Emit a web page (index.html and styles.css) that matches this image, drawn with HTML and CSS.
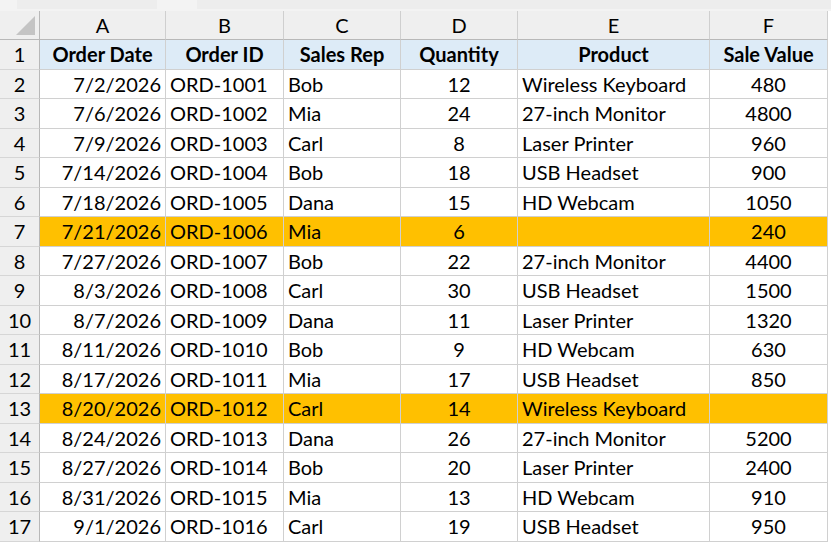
FILE: index.html
```html
<!DOCTYPE html>
<html lang="en">
<head>
  <meta charset="UTF-8" />
  <title>Orders</title>
  <link rel="stylesheet" href="styles.css">
</head>
<body>
  <div class="topbar"><span class="namebox"></span><span class="fx"></span></div>
  <div class="sheet">
    <div class="row colhead">
      <div class="corner"><span class="tri"></span></div>
      <div>A</div><div>B</div><div>C</div><div>D</div><div>E</div><div>F</div>
    </div>
    <div class="row titles">
      <div class="num">1</div>
      <div>Order Date</div><div>Order ID</div><div>Sales Rep</div><div>Quantity</div><div>Product</div><div>Sale Value</div>
    </div>
    <div class="row"><div class="num">2</div><div class="r">7/2/2026</div><div>ORD-1001</div><div>Bob</div><div class="c">12</div><div>Wireless Keyboard</div><div class="c">480</div></div>
    <div class="row"><div class="num">3</div><div class="r">7/6/2026</div><div>ORD-1002</div><div>Mia</div><div class="c">24</div><div>27-inch Monitor</div><div class="c">4800</div></div>
    <div class="row"><div class="num">4</div><div class="r">7/9/2026</div><div>ORD-1003</div><div>Carl</div><div class="c">8</div><div>Laser Printer</div><div class="c">960</div></div>
    <div class="row"><div class="num">5</div><div class="r">7/14/2026</div><div>ORD-1004</div><div>Bob</div><div class="c">18</div><div>USB Headset</div><div class="c">900</div></div>
    <div class="row"><div class="num">6</div><div class="r">7/18/2026</div><div>ORD-1005</div><div>Dana</div><div class="c">15</div><div>HD Webcam</div><div class="c">1050</div></div>
    <div class="row flag"><div class="num">7</div><div class="r">7/21/2026</div><div>ORD-1006</div><div>Mia</div><div class="c">6</div><div></div><div class="c">240</div></div>
    <div class="row"><div class="num">8</div><div class="r">7/27/2026</div><div>ORD-1007</div><div>Bob</div><div class="c">22</div><div>27-inch Monitor</div><div class="c">4400</div></div>
    <div class="row"><div class="num">9</div><div class="r">8/3/2026</div><div>ORD-1008</div><div>Carl</div><div class="c">30</div><div>USB Headset</div><div class="c">1500</div></div>
    <div class="row"><div class="num">10</div><div class="r">8/7/2026</div><div>ORD-1009</div><div>Dana</div><div class="c">11</div><div>Laser Printer</div><div class="c">1320</div></div>
    <div class="row"><div class="num">11</div><div class="r">8/11/2026</div><div>ORD-1010</div><div>Bob</div><div class="c">9</div><div>HD Webcam</div><div class="c">630</div></div>
    <div class="row"><div class="num">12</div><div class="r">8/17/2026</div><div>ORD-1011</div><div>Mia</div><div class="c">17</div><div>USB Headset</div><div class="c">850</div></div>
    <div class="row flag"><div class="num">13</div><div class="r">8/20/2026</div><div>ORD-1012</div><div>Carl</div><div class="c">14</div><div>Wireless Keyboard</div><div class="c"></div></div>
    <div class="row"><div class="num">14</div><div class="r">8/24/2026</div><div>ORD-1013</div><div>Dana</div><div class="c">26</div><div>27-inch Monitor</div><div class="c">5200</div></div>
    <div class="row"><div class="num">15</div><div class="r">8/27/2026</div><div>ORD-1014</div><div>Bob</div><div class="c">20</div><div>Laser Printer</div><div class="c">2400</div></div>
    <div class="row"><div class="num">16</div><div class="r">8/31/2026</div><div>ORD-1015</div><div>Mia</div><div class="c">13</div><div>HD Webcam</div><div class="c">910</div></div>
    <div class="row"><div class="num">17</div><div class="r">9/1/2026</div><div>ORD-1016</div><div>Carl</div><div class="c">19</div><div>USB Headset</div><div class="c">950</div></div>
  </div>
</body>
</html>
```

FILE: styles.css
```css
:root {
  --grid-line: #d0d0d0;
  --head-line: #b8b8b8;
  --head-bg: #efefef;
  --title-bg: #ddebf7;
  --flag-bg: #ffc000;
}

body {
  margin: 0;
  background: #ffffff;
  font-family: Lato, "Open Sans", sans-serif;
  font-size: 20px;
  color: #000;
}

.topbar {
  height: 11px;
  background: #f3f3f3;
  display: flex;
  gap: 40px;
  box-sizing: border-box;
  padding: 0 0 2px 17px;
}

.namebox {
  width: 140px;
  background: #ededed;
}

.fx {
  flex: 1;
  background: #ededed;
}

.sheet {
  width: 828px;
}

.row {
  display: grid;
  grid-template-columns: 40px 126px 118px 117px 117px 192px 118px;
  height: 29.5px;
}

.row > div {
  box-sizing: border-box;
  border-right: 1px solid var(--grid-line);
  border-bottom: 1px solid var(--grid-line);
  padding: 0 4px;
  display: flex;
  align-items: center;
  white-space: nowrap;
  overflow: hidden;
}

.row > .r { justify-content: flex-end; }
.row > .c { justify-content: center; }

.row > .num {
  background: var(--head-bg);
  justify-content: center;
  border-right-color: var(--head-line);
  border-bottom-color: #d6d6d6;
  padding: 0;
}

.colhead {
  height: 29px;
}

.colhead > div {
  background: var(--head-bg);
  justify-content: center;
  border-right-color: #cfcfcf;
  border-bottom-color: var(--head-line);
}

.colhead > .corner {
  position: relative;
  border-right-color: var(--head-line);
}

.tri {
  position: absolute;
  right: 4px;
  bottom: 4px;
  width: 0;
  height: 0;
  border-left: 19px solid transparent;
  border-bottom: 19px solid #c4c4c4;
}

.titles > div:not(.num) {
  background: var(--title-bg);
  font-weight: bold;
  justify-content: center;
}

.flag > div:not(.num) {
  background: var(--flag-bg);
}
```
